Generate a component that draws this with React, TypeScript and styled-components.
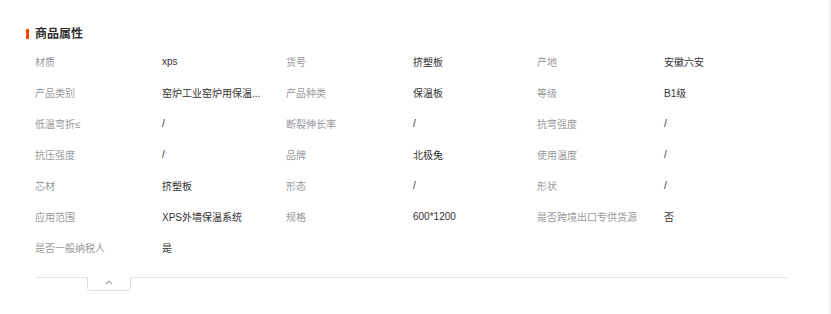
import styled, { createGlobalStyle } from 'styled-components';

interface Attr {
	label: string;
	value: string;
}

const attrs: Attr[] = [
	{ label: '材质', value: 'xps' },
	{ label: '货号', value: '挤塑板' },
	{ label: '产地', value: '安徽六安' },
	{ label: '产品类别', value: '窑炉工业窑炉用保温...' },
	{ label: '产品种类', value: '保温板' },
	{ label: '等级', value: 'B1级' },
	{ label: '低温弯折≤', value: '/' },
	{ label: '断裂伸长率', value: '/' },
	{ label: '抗弯强度', value: '/' },
	{ label: '抗压强度', value: '/' },
	{ label: '品牌', value: '北极兔' },
	{ label: '使用温度', value: '/' },
	{ label: '芯材', value: '挤塑板' },
	{ label: '形态', value: '/' },
	{ label: '形状', value: '/' },
	{ label: '应用范围', value: 'XPS外墙保温系统' },
	{ label: '规格', value: '600*1200' },
	{ label: '是否跨境出口专供货源', value: '否' },
	{ label: '是否一般纳税人', value: '是' },
];

export default function App() {
	return (
		<>
			<GlobalStyle />
			<Page>
				<Section>
					<Title>商品属性</Title>
					<Grid>
						{attrs.map(a => (
							<Cell key={a.label}>
								<Label>{a.label}</Label>
								<Value>{a.value}</Value>
							</Cell>
						))}
					</Grid>
					<Footer>
						<Toggle>
							<svg width="8" height="5" viewBox="0 0 8 5">
								<path d="M1 4.2 L4 1.2 L7 4.2" fill="none" stroke="#999" strokeWidth="1.1" />
							</svg>
						</Toggle>
					</Footer>
				</Section>
			</Page>
		</>
	);
}

const GlobalStyle = createGlobalStyle`
  html, body {
    margin: 0;
    padding: 0;
    background: #fff;
  }
  body {
    font-family: "Liberation Sans", "Noto Sans CJK SC", sans-serif;
  }
`;

const Page = styled.div`
  min-height: 314px;
  box-sizing: border-box;
  border-right: 2px solid #f1f1f1;
  padding: 27px 0 0 26px;
`;

const Section = styled.div`
  width: 762px;
`;

const Title = styled.h3`
  margin: 0;
  display: flex;
  align-items: center;
  gap: 6px;
  font-size: 12px;
  line-height: 14px;
  font-weight: bold;
  color: #333;
  &::before {
    content: '';
    width: 3px;
    height: 10px;
    background: #ff4400;
  }
`;

const Grid = styled.div`
  margin: 5px 0 0 9px;
  display: grid;
  grid-template-columns: repeat(3, 251px);
`;

const Cell = styled.div`
  display: grid;
  grid-template-columns: 127px 124px;
  height: 31px;
  align-items: center;
  font-size: 10px;
`;

const Label = styled.span`
  color: #999;
  white-space: nowrap;
`;

const Value = styled.span`
  color: #333;
  white-space: nowrap;
`;

const Footer = styled.div`
  margin: 14px 0 0 9px;
  width: 753px;
  border-top: 1px solid #e5e5e5;
`;

const Toggle = styled.div`
  margin: -1px 0 0 52px;
  width: 44px;
  height: 14px;
  box-sizing: border-box;
  background: #fff;
  border: 1px solid #ddd;
  border-top: none;
  border-radius: 0 0 4px 4px;
  display: flex;
  justify-content: center;
  align-items: center;
  padding-bottom: 2px;
`;
